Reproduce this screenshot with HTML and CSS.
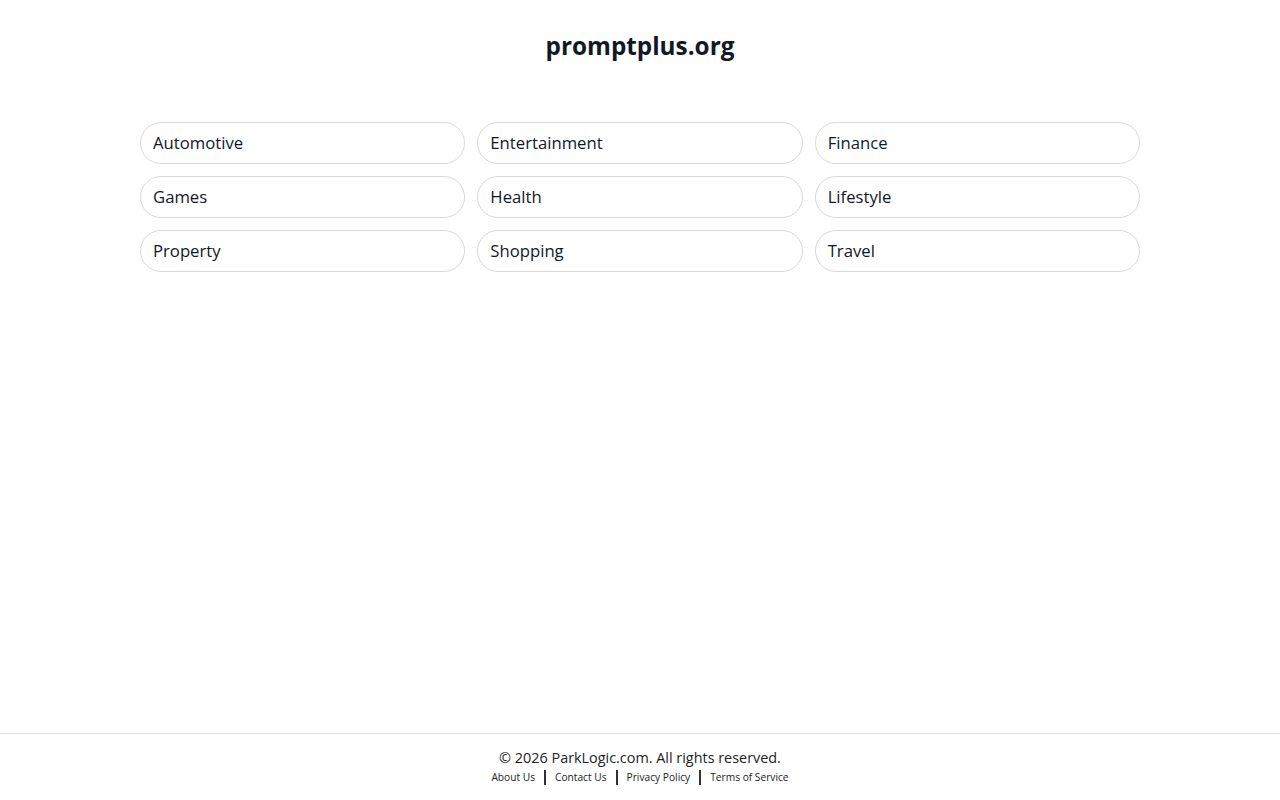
FILE: index.html
```html
<!DOCTYPE html>
<html lang="en">
<head>
<meta charset="utf-8">
<title>promptplus.org</title>
<link rel="stylesheet" href="styles.css">
</head>
<body>
<div class="page">
  <main class="main">
    <h1 class="title">promptplus.org</h1>
    <div class="grid">
      <a class="pill" href="#">Automotive</a>
      <a class="pill" href="#">Entertainment</a>
      <a class="pill" href="#">Finance</a>
      <a class="pill" href="#">Games</a>
      <a class="pill" href="#">Health</a>
      <a class="pill" href="#">Lifestyle</a>
      <a class="pill" href="#">Property</a>
      <a class="pill" href="#">Shopping</a>
      <a class="pill" href="#">Travel</a>
    </div>
  </main>
  <footer class="footer">
    <div class="copy">© 2026 ParkLogic.com. All rights reserved.</div>
    <nav class="links">
      <a href="#">About Us</a>
      <span class="sep"></span>
      <a href="#">Contact Us</a>
      <span class="sep"></span>
      <a href="#">Privacy Policy</a>
      <span class="sep"></span>
      <a href="#">Terms of Service</a>
    </nav>
  </footer>
</div>
</body>
</html>
```
FILE: styles.css
```css
* { box-sizing: border-box; }
html, body { margin: 0; padding: 0; background: #fff; }
body {
  font-family: "Open Sans", "Noto Sans", "Liberation Sans", sans-serif;
  color: #111827;
}
.page {
  min-height: 100vh;
  display: flex;
  flex-direction: column;
}
.main {
  flex: 1;
  display: flex;
  flex-direction: column;
  align-items: center;
  padding-top: 28px;
}
.title {
  margin: 0;
  font-size: 24.3px;
  font-weight: 700;
  line-height: 36px;
  color: #111827;
}
.grid {
  margin-top: 58px;
  width: 1000px;
  display: grid;
  grid-template-columns: repeat(3, 1fr);
  gap: 12px;
}
.pill {
  display: flex;
  align-items: center;
  height: 42px;
  padding: 0 12px 2px;
  border: 1px solid #d9d9d9;
  border-radius: 21px;
  font-size: 16.7px;
  color: #111827;
  text-decoration: none;
}
.footer {
  border-top: 1px solid #e5e5e5;
  height: 67px;
  display: flex;
  flex-direction: column;
  align-items: center;
  padding-top: 14px;
}
.copy {
  font-size: 14.4px;
  line-height: 20px;
  color: #222;
}
.links {
  display: flex;
  align-items: center;
  gap: 9px;
  font-size: 10.2px;
  line-height: 18px;
}
.links a { color: #222; text-decoration: none; }
.sep {
  width: 2px;
  height: 15px;
  background: #333;
}
```
